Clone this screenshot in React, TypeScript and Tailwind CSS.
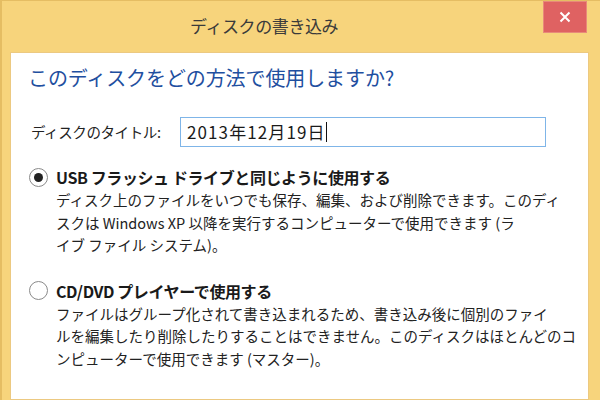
import React from 'react';

const font = { fontFamily: '"Noto Sans CJK JP", "Noto Sans", sans-serif' };

const Radio: React.FC<{ checked?: boolean }> = ({ checked }) => (
  <div className="w-[19px] h-[19px] rounded-full border border-[#8a8a8a] bg-white flex items-center justify-center shrink-0">
    {checked && <div className="w-[9px] h-[9px] rounded-full bg-[#222]" />}
  </div>
);

const Option: React.FC<{ checked?: boolean; label: string; lines: string[] }> = ({ checked, label, lines }) => (
  <div className="flex flex-col">
    <div className="flex items-center gap-[8px] h-[24px]">
      <Radio checked={checked} />
      <span className="text-[16px] font-bold text-[#1a1a1a] leading-none tracking-[-0.4px]">{label}</span>
    </div>
    <div className="pl-[27px] text-[14.5px] text-[#222] leading-[22.5px] tracking-[0px]">
      {lines.map((l, i) => (
        <div key={i} className="whitespace-nowrap">{l}</div>
      ))}
    </div>
  </div>
);

export default function App() {
  return (
    <div style={font} className="w-[600px] h-[400px] overflow-hidden bg-[#f7d47c] border-l-2 border-t border-[#e5bd63] flex flex-col relative">
      <div className="h-[51px] shrink-0 flex items-center pl-[188px]">
        <span className="text-[17px] text-[#3a3a3a] tracking-[-0.4px] pb-[2px]">ディスクの書き込み</span>
      </div>
      <button className="absolute top-0 right-[13px] w-[44px] h-[32px] bg-[#df6262] border border-[#e88a7a] flex items-center justify-center">
        <svg width="12" height="12" viewBox="0 0 12 12">
          <path d="M1.5 1.5 L10.5 10.5 M10.5 1.5 L1.5 10.5" stroke="#fff" strokeWidth="2" />
        </svg>
      </button>
      <div className="flex-1 ml-[8px] mr-[11px] border border-[#ecc981] bg-white flex flex-col pl-[17px]">
        <div className="mt-[10px] text-[20px] text-[#1f4fa0] leading-[30px] tracking-[-0.1px] whitespace-nowrap">
          このディスクをどの方法で使用しますか?
        </div>
        <div className="mt-[24px] flex items-center">
          <span className="w-[152px] pl-[3px] text-[14.5px] text-[#222] tracking-[-0.4px]">ディスクのタイトル:</span>
          <div className="w-[366px] h-[30px] border border-[#7fb5e8] flex items-center pl-[6px] text-[17px] text-[#1a1a1a] tracking-[1.1px]">
            2013年12月19日
            <span className="inline-block w-[1px] h-[20px] bg-[#111]" />
          </div>
        </div>
        <div className="mt-[18px] ml-[1px]">
          <Option
            checked
            label="USB フラッシュ ドライブと同じように使用する"
            lines={[
              'ディスク上のファイルをいつでも保存、編集、および削除できます。このディ',
              'スクは Windows XP 以降を実行するコンピューターで使用できます (ラ',
              'イブ ファイル システム)。',
            ]}
          />
        </div>
        <div className="mt-[22px] ml-[1px]">
          <Option
            label="CD/DVD プレイヤーで使用する"
            lines={[
              'ファイルはグループ化されて書き込まれるため、書き込み後に個別のファイ',
              'ルを編集したり削除したりすることはできません。このディスクはほとんどのコ',
              'ンピューターで使用できます (マスター)。',
            ]}
          />
        </div>
      </div>
    </div>
  );
}
